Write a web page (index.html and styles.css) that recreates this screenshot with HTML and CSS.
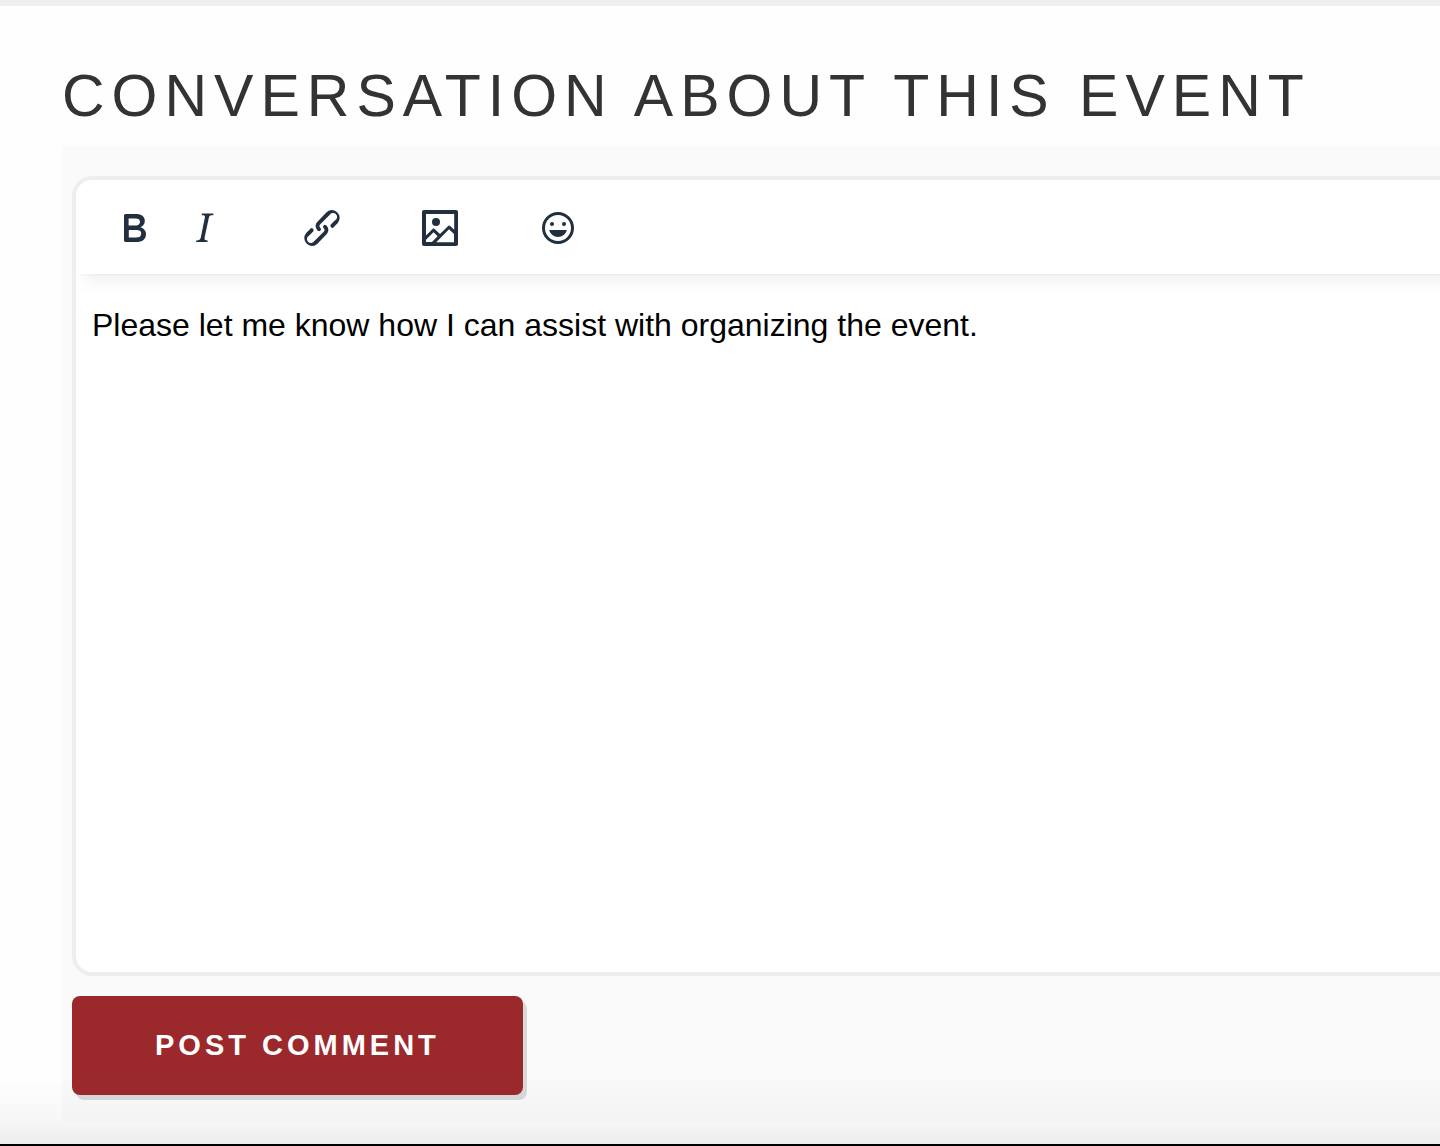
FILE: index.html
```html
<!DOCTYPE html>
<html lang="en">
<head>
<meta charset="utf-8">
<title>Conversation about this event</title>
<link rel="stylesheet" href="styles.css">
</head>
<body>
<main class="page">
  <h2 class="heading">Conversation about this event</h2>
  <form class="comment-form">
    <div class="editor">
      <div class="toolbar" role="toolbar" aria-label="Formatting">
        <div class="group">
          <button class="tool" type="button" aria-label="Bold"><svg viewBox="0 0 24 24"><path fill-rule="evenodd" d="M7.8 19c-.3 0-.5 0-.6-.2l-.2-.5V5.7c0-.2 0-.4.2-.5l.6-.2h5c1.5 0 2.7.3 3.5 1 .7.6 1.1 1.4 1.1 2.5a3 3 0 0 1-.6 1.9c-.4.6-1 1-1.6 1.2.4.1.9.3 1.3.6s.8.7 1 1.2c.4.4.5 1 .5 1.6 0 1.3-.4 2.3-1.3 3-.8.7-2.1 1-3.8 1H7.8zm5-8.3c.6 0 1.2-.1 1.6-.5.4-.3.6-.7.6-1.3 0-1.1-.8-1.7-2.3-1.7H9.3v3.5h3.4zm.5 6c.7 0 1.3-.1 1.7-.4.4-.4.6-.9.6-1.5s-.2-1-.7-1.4c-.4-.3-1-.4-2-.4H9.4v3.8h4z"/></svg></button>
          <button class="tool" type="button" aria-label="Italic"><svg viewBox="0 0 24 24"><path d="m16.7 4.7-.1.9h-.3c-.6 0-1 0-1.4.3-.3.3-.4.6-.5 1.1l-2.1 9.8v.6c0 .5.4.8 1.4.8h.2l-.2.8H8l.2-.8h.2c1.1 0 1.8-.5 2-1.5l2-9.8.1-.5c0-.6-.4-.8-1.4-.8h-.3l.2-.9h5.8z"/></svg></button>
        </div>
        <div class="group">
          <button class="tool" type="button" aria-label="Insert link"><svg viewBox="0 0 24 24"><path d="M6.2 12.3a1 1 0 0 1 1.4 1.4l-2 2a2 2 0 1 0 2.6 2.8l4.8-4.8a1 1 0 0 0 0-1.4 1 1 0 1 1 1.4-1.3 2.9 2.9 0 0 1 0 4L9.6 20a3.9 3.9 0 0 1-5.5-5.5l2-2zm11.6-.6a1 1 0 0 1-1.4-1.4l2-2a2 2 0 1 0-2.6-2.8L11 10.3a1 1 0 0 0 0 1.4A1 1 0 1 1 9.6 13a2.9 2.9 0 0 1 0-4L14.4 4a3.9 3.9 0 0 1 5.5 5.5l-2 2z"/></svg></button>
        </div>
        <div class="group">
          <button class="tool" type="button" aria-label="Insert image"><svg viewBox="0 0 24 24"><path fill-rule="evenodd" d="m5 15.7 3.3-3.2c.3-.3.7-.3 1 0L12 15l4.1-4c.3-.4.8-.4 1 0l2 1.9V5H5v10.7zM5 18V19h3l2.8-2.9-2-2L5 17.9zm14-3-2.5-2.4-6.4 6.5H19v-4zM4 3h16c.6 0 1 .4 1 1v16c0 .6-.4 1-1 1H4a1 1 0 0 1-1-1V4c0-.6.4-1 1-1z"/><circle cx="10" cy="9" r="2"/></svg></button>
        </div>
        <div class="group">
          <button class="tool" type="button" aria-label="Emoticons"><svg viewBox="0 0 24 24"><path fill-rule="evenodd" d="M9 11c.6 0 1-.4 1-1s-.4-1-1-1a1 1 0 0 0-1 1c0 .6.4 1 1 1zm6 0c.6 0 1-.4 1-1s-.4-1-1-1a1 1 0 0 0-1 1c0 .6.4 1 1 1zm-3 5.5c2.1 0 4-1.5 4.4-3.5H7.6c.5 2 2.3 3.5 4.4 3.5zM12 4a8 8 0 1 0 0 16 8 8 0 0 0 0-16zm0 14.5a6.5 6.5 0 1 1 0-13 6.5 6.5 0 0 1 0 13z"/></svg></button>
        </div>
      </div>
      <textarea class="message" aria-label="Comment" spellcheck="false">Please let me know how I can assist with organizing the event.</textarea>
    </div>
    <button class="submit" type="submit">Post comment</button>
  </form>
</main>
<div class="bottom-bar"></div>
</body>
</html>
```
FILE: styles.css
```css
* { box-sizing: border-box; }

body {
  margin: 0;
  background: #fefefe;
  font-family: Arial, "Liberation Sans", sans-serif;
}

.page {
  border-top: 6px solid #efefef;
  padding: 54px 0 23px 62px;
}

.heading {
  margin: 0 0 14px;
  color: #333;
  font-size: 59px;
  font-weight: 400;
  line-height: 72px;
  letter-spacing: 7px;
  text-transform: uppercase;
}

.comment-form {
  padding: 30px 0 26px 10px;
  background: #fafafa;
}

.editor {
  display: flex;
  flex-direction: column;
  margin-bottom: 20px;
  overflow: hidden;
  border: 4px solid #eee;
  border-right: 0;
  border-radius: 20px 0 0 20px;
  background: #fff;
}

/* The toolbar runs past the right edge so its shadow does not taper there */
.toolbar {
  display: flex;
  height: 94px;
  align-items: center;
  margin-right: -24px;
  padding-top: 2px;
  background: #fff;
  box-shadow: 0 4px 4px -4px rgba(0, 0, 0, .06), 0 16px 16px -8px rgba(0, 0, 0, .06);
}

.group {
  display: flex;
  gap: 2px;
  margin-right: 2px;
  padding: 0 24px;
}

.tool {
  display: flex;
  width: 68px;
  height: 68px;
  align-items: center;
  justify-content: center;
  padding: 0;
  border: 0;
  background: none;
}

.tool svg {
  width: 48px;
  height: 48px;
  fill: #222f3e;
}

.message {
  height: 698px;
  padding: 28px 16px;
  border: 0;
  outline: 0;
  background: none;
  color: #000;
  font: 32px/47px "Liberation Sans", Arial, sans-serif;
  resize: none;
}

.submit {
  display: block;
  height: 99px;
  padding: 0 83px 2px;
  border: 0;
  border-radius: 8px;
  background: #9b292c;
  box-shadow: 4px 5px 0 #d9d9d9;
  color: #fff;
  font: bold 29px/36px "Liberation Sans", Arial, sans-serif;
  letter-spacing: 4px;
  text-transform: uppercase;
}

.bottom-bar {
  position: relative;
  height: 2px;
  background: #000;
}

/* Soft shade that the bar casts over the end of the page */
.bottom-bar::before {
  content: "";
  position: absolute;
  right: 0;
  bottom: 100%;
  left: 0;
  height: 70px;
  background: linear-gradient(rgba(0, 0, 0, 0), rgba(0, 0, 0, .028) 65%, rgba(0, 0, 0, .065));
  pointer-events: none;
}
```
